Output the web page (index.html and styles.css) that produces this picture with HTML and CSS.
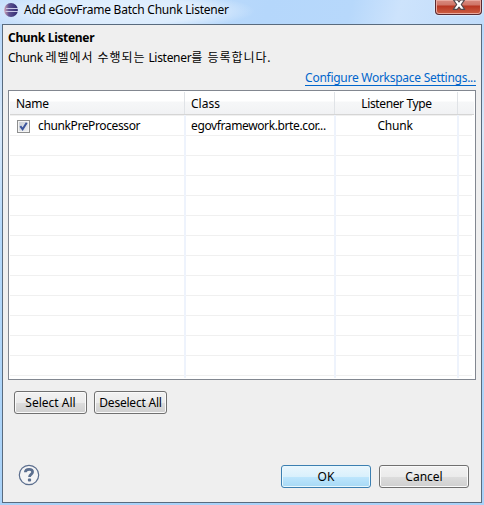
FILE: index.html
```html
<!DOCTYPE html>
<html lang="ko">
<head>
<meta charset="utf-8">
<title>Add eGovFrame Batch Chunk Listener</title>
<link rel="stylesheet" href="styles.css">
</head>
<body>
<div class="window">
  <header class="titlebar">
    <svg class="logo" width="14" height="14" viewBox="0 0 14 14">
      <defs><linearGradient id="g" x1="0" x2="1"><stop offset="0" stop-color="#d3a5b5"/><stop offset=".35" stop-color="#5d5292"/><stop offset="1" stop-color="#302b70"/></linearGradient></defs>
      <circle cx="7" cy="7" r="6.900" fill="url(#g)"/>
      <path d="M2 5.500h12M1.500 8.500h12.500" stroke="#c9c9e6" stroke-width="1"/>
    </svg>
    <h1 class="title">Add eGovFrame Batch Chunk Listener</h1>
    <div class="close">
      <svg width="14" height="12" viewBox="0 0 14 12"><path d="M1.500 1h4L7 3l1.500-2h4L9.300 5.500l3.400 4.800h-4L7 8.100l-1.700 2.200h-4L4.700 5.500z" fill="#fff" stroke="#53484c" stroke-width="1.200" stroke-linejoin="round"/></svg>
    </div>
  </header>
  <main class="client">
    <h2 class="heading">Chunk Listener</h2>
    <p class="desc">Chunk <span class="ko">레벨에서 수행되는</span> Listener<span class="ko">를 등록합니다.</span></p>
    <div class="link-row"><a class="link">Configure Workspace Settings...</a></div>
    <div class="table">
      <div class="row head"><div class="cell name-head">Name</div><div class="cell">Class</div><div class="cell mid tight">Listener Type</div><div class="cell"></div></div>
      <div class="body">
        <div class="row"><div class="cell check-cell"><span class="check"><svg width="9" height="9" viewBox="0 0 9 9"><path d="M1.300 4.200l2.300 3L7.700.8" fill="none" stroke="#3c559c" stroke-width="2"/></svg></span><span class="tight">chunkPreProcessor</span></div><div class="cell tight">egovframework.brte.cor...</div><div class="cell mid chunk">Chunk</div><div class="cell"></div></div>
        <div class="row empty"><div class="cell"></div><div class="cell"></div><div class="cell"></div><div class="cell"></div></div>
      </div>
    </div>
    <div class="select-row">
      <div class="button small">Select All</div>
      <div class="button small deselect">Deselect All</div>
    </div>
    <footer class="footer">
      <svg class="help" width="22" height="22" viewBox="0 0 22 22"><circle cx="11" cy="11" r="9.700" fill="#f4f4f5" stroke="#5b6e8e" stroke-width="1.200"/><path d="M7.300 8.300C7.400 6.200 9 5.300 11.100 5.300c2.100 0 3.500 1 3.500 2.700 0 2.400-3.100 2.400-3.100 5" fill="none" stroke="#5b6e8e" stroke-width="2.700"/><rect x="9.900" y="14.600" width="3.200" height="2.900" rx="1" fill="#5b6e8e"/></svg>
      <div class="button primary">OK</div>
      <div class="button">Cancel</div>
    </footer>
  </main>
</div>
</body>
</html>
```

FILE: styles.css
```css
* { box-sizing: border-box; }
body {
  margin: 0;
  font: 12px/20px "Noto Sans", "Noto Sans CJK KR", sans-serif;
  color: #000;
  overflow: hidden;
}
.window {
  width: 484px;
  height: 505px;
  padding: 0 2px 2px;
  background: linear-gradient(#b9d9fb 0, #b9d9fb 30px, #d9e9fa 130px, #b4d8fa 230px, #a9d2f8 100%);
}
.titlebar {
  height: 24px;
  margin: 0 -2px;
  padding-left: 4px;
  display: flex;
  align-items: flex-start;
  background:
    radial-gradient(ellipse 135px 20px at 120px 11px, #e4f0fd 0, #dcecfd 65%, transparent 100%),
    linear-gradient(105deg, #c8e0fb 0, #b5d7fb 55%, #b7d8fb 72%, #cde3fc 82%, #c0dcfa 100%);
}
.logo { margin-top: 3px; }
.title {
  flex: 1;
  margin: 0 0 0 6px;
  font-size: 12px;
  font-weight: 400;
  line-height: 20px;
  letter-spacing: -0.24px;
}
.close {
  width: 47px;
  height: 15px;
  margin-right: 2px;
  display: flex;
  justify-content: center;
  border: 1px solid #592a32;
  border-top: 0;
  border-radius: 0 0 4px 4px;
  box-shadow: inset 0 0 0 1px #e9aaa0, 0 0 1px 1px #dcebfa;
  background: linear-gradient(#d98b80 0, #cf7567 5px, #b83622 6px, #cc6044 100%);
}
.close svg { margin-top: -1px; }
.client {
  height: 479px;
  display: flex;
  flex-direction: column;
  border: 1px solid #596b7e;
  background: #efefef;
  padding: 3px 5px 0;
}
.heading { margin: 0; font-size: 12px; line-height: 20px; letter-spacing: -0.32px; }
.desc { margin: 0; line-height: 20px; letter-spacing: -0.3px; }
.ko { letter-spacing: 0.95px; }
.link-row { display: flex; justify-content: flex-end; height: 22px; }
.link {
  height: 17px;
  margin-top: 1px;
  line-height: 18px;
  letter-spacing: -0.27px;
  color: #0066cc;
  border-bottom: 1px solid #0066cc;
}
.table {
  width: 468px;
  height: 290px;
  border: 1px solid #828790;
  background: #fff;
  padding: 1px;
}
.row { display: grid; grid-template-columns: 176px 150px 123px 1fr; height: 20px; }
.cell { padding-left: 5px; border-right: 2px solid #eef3fc; white-space: nowrap; overflow: hidden; }
.cell:last-child { border-right: 0; }
.name-head { padding-left: 6px; letter-spacing: -0.3px; }
.mid { padding: 0; text-align: center; }
.tight { letter-spacing: -0.38px; }
.head {
  height: 23px;
  line-height: 23px;
  background: linear-gradient(#fff 0, #fff 9px, #f6f7f8 10px, #f1f2f4 100%);
  border-bottom: 1px solid #d5d5d5;
}
.head .cell { border-right: 1px solid #e0e3e7; margin-right: 1px; }
.head .cell:last-child { border: 0; }
.body {
  height: 263px;
  margin-right: 2px;
  background: linear-gradient(transparent 19px, #f0f0f0 19px) 0 1px / 100% 20px;
}
.body .cell { line-height: 22px; }
.body .empty { height: 243px; }
.chunk { padding-right: 3px; letter-spacing: -0.2px; }
.check-cell { display: flex; }
.check {
  width: 13px;
  height: 13px;
  margin: 5px 8px 0 2px;
  display: flex;
  align-items: center;
  justify-content: center;
  border: 1px solid #8e8f8f;
  box-shadow: inset 0 0 0 1px #f4f4f4;
  background: linear-gradient(135deg, #c5cbd3, #f2f3f5);
}
.select-row { display: flex; gap: 7px; margin: 11px 0 0 6px; }
.button {
  width: 90px;
  height: 23px;
  line-height: 21px;
  text-align: center;
  white-space: nowrap;
  border: 1px solid #707070;
  border-radius: 3px;
  box-shadow: inset 0 0 0 1px #fafafa;
  background: linear-gradient(#f2f2f2 0, #ebebeb 50%, #dddddd 50%, #cfcfcf 100%);
}
.small { width: 73px; }
.deselect { letter-spacing: -0.22px; }
.primary {
  margin-left: auto;
  border-color: #3c7fb1;
  box-shadow: inset 0 0 0 1px #e8f8fe;
  background: linear-gradient(#eaf6fd 0, #d9f0fc 50%, #bee6fd 50%, #a7d9f5 100%);
}
.footer { display: flex; gap: 8px; margin: 51px 7px 0 10px; }
.help { margin-top: -1px; }
```
